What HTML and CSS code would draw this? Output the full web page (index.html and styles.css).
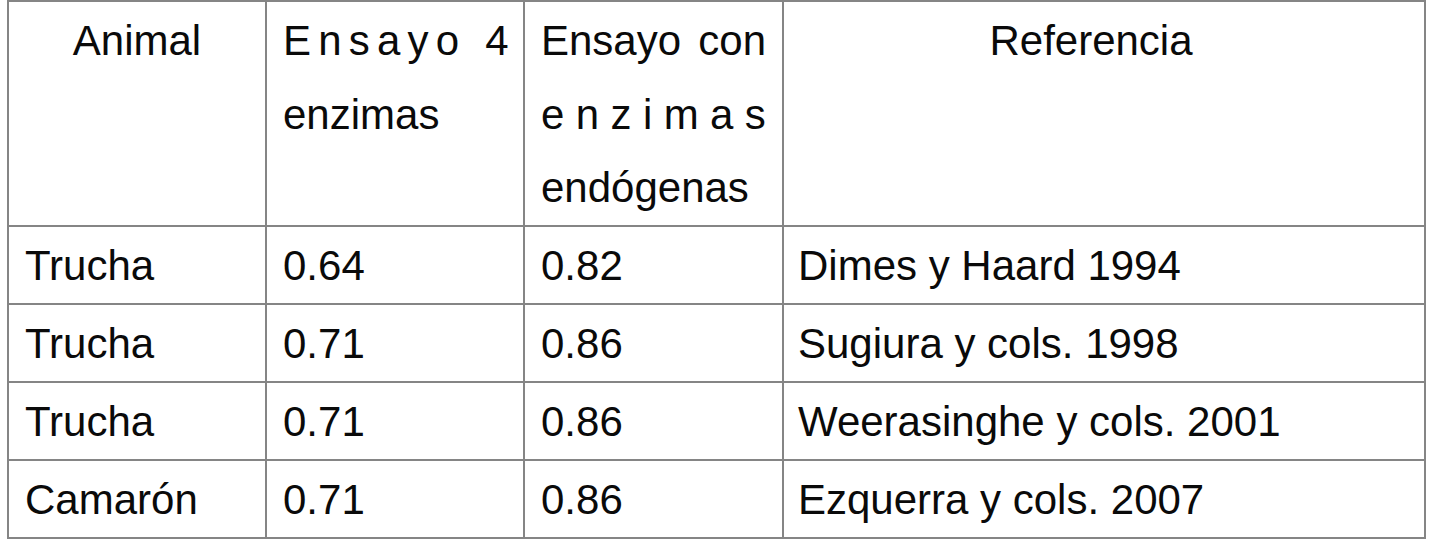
FILE: index.html
```html
<!DOCTYPE html>
<html lang="es">
<head>
<meta charset="utf-8">
<title>Tabla</title>
<link rel="stylesheet" href="styles.css">
</head>
<body>
<table class="data">
  <colgroup>
    <col class="c1">
    <col class="c2">
    <col class="c3">
    <col class="c4">
  </colgroup>
  <thead>
    <tr>
      <th class="center">Animal</th>
      <th>
        <div class="spread-4">Ensayo 4</div>
        <div>enzimas</div>
      </th>
      <th>
        <div class="justify">Ensayo con</div>
        <div class="spread-enz">enzimas</div>
        <div>endógenas</div>
      </th>
      <th class="center ref">Referencia</th>
    </tr>
  </thead>
  <tbody>
    <tr><td>Trucha</td><td>0.64</td><td>0.82</td><td class="ref-cell">Dimes y Haard 1994</td></tr>
    <tr><td>Trucha</td><td>0.71</td><td>0.86</td><td class="ref-cell">Sugiura y cols. 1998</td></tr>
    <tr><td>Trucha</td><td>0.71</td><td>0.86</td><td class="ref-cell">Weerasinghe y cols. 2001</td></tr>
    <tr><td>Camarón</td><td>0.71</td><td>0.86</td><td class="ref-cell">Ezquerra y cols. 2007</td></tr>
  </tbody>
</table>
</body>
</html>
```
FILE: styles.css
```css
html, body {
  margin: 0;
  padding: 0;
  background: #ffffff;
}

body {
  font-family: "Liberation Sans", Arial, sans-serif;
  font-size: 42px;
  color: #0a0a0a;
}

.data {
  margin: 0 0 0 7px;
  width: 1417px;
  table-layout: fixed;
  border-collapse: collapse;
  border: 2px solid #7c7c7c;
}

.c1 { width: 258px; }
.c2 { width: 258px; }
.c3 { width: 259px; }
.c4 { width: 642px; }

.data th,
.data td {
  border: 2px solid #858585;
  padding: 2px 16px 0 16px;
  line-height: 73.5px;
  font-weight: normal;
  text-align: left;
  vertical-align: top;
  white-space: nowrap;
}

.data td {
  padding-top: 2.5px;
}

.data th.center {
  text-align: center;
}

.data th.ref {
  padding-right: 42px;
}

.data td.ref-cell {
  padding-left: 14px;
}

.spread-4 {
  letter-spacing: 7.2px;
}

.spread-enz {
  letter-spacing: 11.4px;
}

.justify {
  text-align: justify;
  text-align-last: justify;
}
```
